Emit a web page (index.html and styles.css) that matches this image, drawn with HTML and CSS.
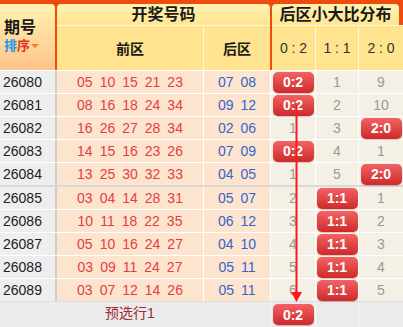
FILE: index.html
```html
<!DOCTYPE html>
<html lang="zh">
<head>
<meta charset="utf-8">
<title>后区小大比分布</title>
<link rel="stylesheet" href="styles.css">
</head>
<body>
<div class="board">
  <div class="head">
    <div class="h-qh">
      <div class="h-title">期号</div>
      <div class="h-sort"><span class="s-b">排</span><span class="s-r">序</span><span class="tri"></span></div>
    </div>
    <div class="h-kj">开奖号码</div>
    <div class="h-fb">后区小大比分布</div>
    <div class="h-sub h-qq">前区</div>
    <div class="h-sub h-hq">后区</div>
    <div class="h-sub h-r h-02">0 : 2</div>
    <div class="h-sub h-r h-11">1 : 1</div>
    <div class="h-sub h-r h-20">2 : 0</div>
  </div>

  <div class="row">
    <div class="c-no">26080</div>
    <div class="c-front"><span>05</span><span>10</span><span>15</span><span>21</span><span>23</span></div>
    <div class="c-back"><span>07</span><span>08</span></div>
    <div class="c-d"><span class="badge">0:2</span></div>
    <div class="c-d">1</div>
    <div class="c-d">9</div>
  </div>
  <div class="row">
    <div class="c-no">26081</div>
    <div class="c-front"><span>08</span><span>16</span><span>18</span><span>24</span><span>34</span></div>
    <div class="c-back"><span>09</span><span>12</span></div>
    <div class="c-d"><span class="badge">0:2</span></div>
    <div class="c-d">2</div>
    <div class="c-d">10</div>
  </div>
  <div class="row">
    <div class="c-no">26082</div>
    <div class="c-front"><span>16</span><span>26</span><span>27</span><span>28</span><span>34</span></div>
    <div class="c-back"><span>02</span><span>06</span></div>
    <div class="c-d">1</div>
    <div class="c-d">3</div>
    <div class="c-d"><span class="badge">2:0</span></div>
  </div>
  <div class="row">
    <div class="c-no">26083</div>
    <div class="c-front"><span>14</span><span>15</span><span>16</span><span>23</span><span>26</span></div>
    <div class="c-back"><span>07</span><span>09</span></div>
    <div class="c-d"><span class="badge">0:2</span></div>
    <div class="c-d">4</div>
    <div class="c-d">1</div>
  </div>
  <div class="row">
    <div class="c-no">26084</div>
    <div class="c-front"><span>13</span><span>25</span><span>30</span><span>32</span><span>33</span></div>
    <div class="c-back"><span>04</span><span>05</span></div>
    <div class="c-d">1</div>
    <div class="c-d">5</div>
    <div class="c-d"><span class="badge">2:0</span></div>
  </div>

  <div class="row sep">
    <div class="c-no">26085</div>
    <div class="c-front"><span>03</span><span>04</span><span>14</span><span>28</span><span>31</span></div>
    <div class="c-back"><span>05</span><span>07</span></div>
    <div class="c-d">2</div>
    <div class="c-d"><span class="badge">1:1</span></div>
    <div class="c-d">1</div>
  </div>
  <div class="row">
    <div class="c-no">26086</div>
    <div class="c-front"><span>10</span><span>11</span><span>18</span><span>22</span><span>35</span></div>
    <div class="c-back"><span>06</span><span>12</span></div>
    <div class="c-d">3</div>
    <div class="c-d"><span class="badge">1:1</span></div>
    <div class="c-d">2</div>
  </div>
  <div class="row">
    <div class="c-no">26087</div>
    <div class="c-front"><span>05</span><span>10</span><span>16</span><span>24</span><span>27</span></div>
    <div class="c-back"><span>04</span><span>10</span></div>
    <div class="c-d">4</div>
    <div class="c-d"><span class="badge">1:1</span></div>
    <div class="c-d">3</div>
  </div>
  <div class="row">
    <div class="c-no">26088</div>
    <div class="c-front"><span>03</span><span>09</span><span>11</span><span>24</span><span>27</span></div>
    <div class="c-back"><span>05</span><span>11</span></div>
    <div class="c-d">5</div>
    <div class="c-d"><span class="badge">1:1</span></div>
    <div class="c-d">4</div>
  </div>
  <div class="row">
    <div class="c-no">26089</div>
    <div class="c-front"><span>03</span><span>07</span><span>12</span><span>14</span><span>26</span></div>
    <div class="c-back"><span>05</span><span>11</span></div>
    <div class="c-d">6</div>
    <div class="c-d"><span class="badge">1:1</span></div>
    <div class="c-d">5</div>
  </div>

  <div class="foot">
    <div class="f-no"></div>
    <div class="f-txt">预选行1</div>
    <div class="f-back"></div>
    <div class="f-d"><span class="badge">0:2</span></div>
    <div class="f-d"></div>
    <div class="f-d"></div>
  </div>

  <svg class="arrow" width="403" height="327" viewBox="0 0 403 327">
    <line x1="296.5" y1="105" x2="296.5" y2="294" stroke="#ff1a1a" stroke-width="2"/>
    <polygon points="291,292 302,292 296.5,302" fill="#ff1a1a"/>
  </svg>
</div>
</body>
</html>
```

FILE: styles.css
```css
html, body {
  margin: 0;
  padding: 0;
  background: #ffffff;
}

.board {
  position: relative;
  width: 403px;
  height: 327px;
  overflow: hidden;
  font-family: "Liberation Sans", "Noto Sans CJK SC", sans-serif;
  font-size: 14px;
  color: #222222;
}

/* ---------- header ---------- */
.head {
  display: grid;
  grid-template-columns: 55px 148px 67px 45px 43px 45px;
  grid-template-rows: 21px 45px;
  padding-top: 4px;
  height: 70px;
  box-sizing: border-box;
  background: #f04a0e;
}

.h-qh {
  grid-row: 1 / 3;
  grid-column: 1;
  background: linear-gradient(#fff2b2, #ffc489);
  border-top-right-radius: 4px;
  display: flex;
  flex-direction: column;
  justify-content: center;
  padding-left: 4px;
}

.h-title {
  font-size: 16px;
  font-weight: bold;
  line-height: 18px;
  color: #1a1a1a;
}

.h-sort {
  font-size: 13px;
  font-weight: bold;
  line-height: 18px;
  display: flex;
  align-items: center;
}

.s-b { color: #2196f0; }
.s-r { color: #e3342c; }

.tri {
  width: 0;
  height: 0;
  margin-left: 1px;
  border-left: 4px solid transparent;
  border-right: 4px solid transparent;
  border-top: 4px solid #ff7a1a;
}

.h-kj,
.h-fb {
  grid-row: 1;
  margin-left: 2px;
  border-radius: 4px 4px 0 0;
  background: linear-gradient(#fff2b2, #ffe590);
  font-size: 16px;
  font-weight: bold;
  line-height: 21px;
  text-align: center;
  color: #1a1a1a;
}

.h-kj { grid-column: 2 / 4; }
.h-fb { grid-column: 4 / 7; margin-right: 4px; }

.h-sub {
  grid-row: 2;
  border-top: 1px solid #fff6dc;
  background: #ffe38e;
  display: flex;
  align-items: center;
  justify-content: center;
}

.h-qq,
.h-hq {
  font-size: 14px;
  font-weight: bold;
  color: #1a1a1a;
}

.h-qq { grid-column: 2; margin-left: 2px; }
.h-hq { grid-column: 3; border-left: 1px solid #fff6dc; }

.h-r {
  font-size: 14px;
  color: #333333;
}

.h-02 { grid-column: 4; margin-left: 2px; }
.h-11 { grid-column: 5; border-left: 1px solid #fff6dc; }
.h-20 { grid-column: 6; border-left: 1px solid #fff6dc; }

/* ---------- body rows ---------- */
.row {
  display: grid;
  grid-template-columns: 55px 148px 67px 45px 43px 45px;
  height: 23px;
  box-sizing: border-box;
  border-top: 1px solid #ffffff;
}

.row.sep {
  height: 24px;
  border-top: 2px solid #d9d9d9;
}

.c-no {
  background: #eeeeee;
  padding-left: 3px;
  line-height: 22px;
  color: #222222;
}

.c-front,
.c-back {
  background: #fde4ce;
  display: flex;
  align-items: center;
  justify-content: center;
  gap: 7px;
}

.c-front {
  border-left: 2px solid #cccccc;
  color: #e4403f;
}

.c-back {
  border-left: 1px solid #ffffff;
  color: #3566cc;
}

.c-d {
  background: #f5f0e5;
  border-left: 1px solid #ffffff;
  display: flex;
  align-items: center;
  justify-content: center;
  color: #999999;
}

.badge {
  width: 41px;
  height: 21px;
  border-radius: 5px;
  background: linear-gradient(#f46262, #cd2a2a);
  box-shadow: 0 1px 1px rgba(120, 0, 0, 0.25);
  color: #ffffff;
  font-weight: bold;
  font-size: 14px;
  display: flex;
  align-items: center;
  justify-content: center;
}

/* ---------- footer ---------- */
.foot {
  display: grid;
  grid-template-columns: 55px 148px 67px 45px 43px 45px;
  height: 26px;
  box-sizing: border-box;
  border-top: 1px solid #dddddd;
  background: #ebebeb;
}

.f-txt {
  padding-left: 2px;
  text-align: center;
  line-height: 22px;
  color: #a3282c;
}

.f-d {
  border-left: 1px solid #f8f8f8;
  display: flex;
  justify-content: center;
  align-items: flex-start;
  padding-top: 2px;
}

.arrow {
  position: absolute;
  left: 0;
  top: 0;
  pointer-events: none;
}
```
